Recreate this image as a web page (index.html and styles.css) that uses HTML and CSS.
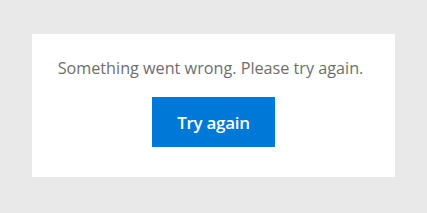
FILE: index.html
```html
<!DOCTYPE html>
<html lang="en">

<head>
    <meta charset="UTF-8">
    <meta name="viewport" content="width=device-width, initial-scale=1.0">
    <title>Error</title>
    <link rel="stylesheet" href="styles.css">
</head>

<body>
    <div class="page">
        <div class="error-card">
            <p class="error-message">Something went wrong. Please try again.</p>
            <button class="retry-button">Try again</button>
        </div>
    </div>
</body>

</html>
```

FILE: styles.css
```css
* {
    margin: 0;
    padding: 0;
    box-sizing: border-box;
    font-family: "Open Sans", "Noto Sans", sans-serif;
}

body {
    background-color: #e9e9e9;
}

.page {
    height: 213px;
    padding: 34px 32px 36px;
}

.error-card {
    background: white;
    height: 143px;
    display: flex;
    flex-direction: column;
    align-items: center;
    padding-top: 23px;
}

.error-message {
    color: #6e6e6e;
    font-size: 16.2px;
    line-height: 22px;
    margin: 0 6px 18px 0;
}

.retry-button {
    width: 123px;
    height: 50px;
    background-color: #0078d7;
    color: white;
    border: none;
    font-size: 17px;
    font-weight: 600;
    letter-spacing: -0.3px;
    cursor: pointer;
}
```
